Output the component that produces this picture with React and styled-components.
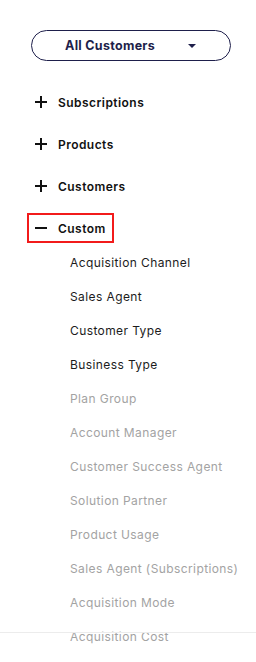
import React from "react";
import styled, { createGlobalStyle } from "styled-components";

const GlobalStyle = createGlobalStyle`
  body {
    margin: 0;
    background: #fff;
    font-family: Inter, "Noto Sans", sans-serif;
  }
`;

const Panel = styled.div`
  position: relative;
  width: 256px;
  height: 662px;
  overflow: hidden;
  background: #fff;
  padding-top: 30px;
  box-sizing: border-box;
`;

const SelectButton = styled.button`
  display: flex;
  align-items: center;
  justify-content: space-between;
  box-sizing: border-box;
  width: 200px;
  height: 31px;
  margin-left: 31px;
  padding: 0 34px 0 33px;
  border: 1.5px solid #1e1f4b;
  border-radius: 16px;
  background: #fff;
  color: #1e1f4b;
  font-family: Inter, sans-serif;
  font-size: 12.5px;
  font-weight: 700;
  letter-spacing: 0.3px;
  cursor: pointer;
`;

const Caret = styled.span`
  width: 0;
  height: 0;
  border-left: 4px solid transparent;
  border-right: 4px solid transparent;
  border-top: 4px solid #1e1f4b;
`;

const Nav = styled.nav`
  display: flex;
  flex-direction: column;
  align-items: flex-start;
  margin-top: 26px;
`;

const GroupRow = styled.div`
  display: inline-flex;
  align-items: center;
  gap: 11px;
  box-sizing: border-box;
  height: 30px;
  margin-left: 27px;
  margin-bottom: ${(p) => (p.$open ? "2px" : "12px")};
  padding: 0 6px 0 6px;
  border: 2px solid ${(p) => (p.$active ? "#f21b1b" : "transparent")};
  color: #111;
  font-size: 12px;
  font-weight: 600;
  letter-spacing: 0.45px;
  cursor: pointer;
`;

const SubItem = styled.div`
  display: flex;
  align-items: center;
  height: 34px;
  padding-left: 70px;
  font-size: 12px;
  letter-spacing: 0.4px;
  color: ${(p) => (p.$muted ? "#a3a3a3" : "#1c1c1c")};
  white-space: nowrap;
`;

const Divider = styled.div`
  position: absolute;
  left: 0;
  right: 0;
  top: 632px;
  height: 1px;
  background: #ececec;
`;

const Toggle = ({ open }) => (
  <svg width="12" height="12" viewBox="0 0 12 12">
    <path d="M0 6h12" stroke="#111" strokeWidth="2" />
    {!open && <path d="M6 0v12" stroke="#111" strokeWidth="2" />}
  </svg>
);

const groups = [
  { name: "Subscriptions" },
  { name: "Products" },
  { name: "Customers" },
  { name: "Custom", open: true },
];

const customItems = [
  { label: "Acquisition Channel" },
  { label: "Sales Agent" },
  { label: "Customer Type" },
  { label: "Business Type" },
  { label: "Plan Group", muted: true },
  { label: "Account Manager", muted: true },
  { label: "Customer Success Agent", muted: true },
  { label: "Solution Partner", muted: true },
  { label: "Product Usage", muted: true },
  { label: "Sales Agent (Subscriptions)", muted: true },
  { label: "Acquisition Mode", muted: true },
  { label: "Acquisition Cost", muted: true },
];

export default function App() {
  return (
    <>
      <GlobalStyle />
      <Panel>
        <SelectButton>
          All Customers
          <Caret />
        </SelectButton>
        <Nav>
          {groups.map((g) => (
            <React.Fragment key={g.name}>
              <GroupRow $open={g.open} $active={g.open}>
                <Toggle open={g.open} />
                {g.name}
              </GroupRow>
              {g.open &&
                customItems.map((item) => (
                  <SubItem key={item.label} $muted={item.muted}>
                    {item.label}
                  </SubItem>
                ))}
            </React.Fragment>
          ))}
        </Nav>
        <Divider />
      </Panel>
    </>
  );
}
